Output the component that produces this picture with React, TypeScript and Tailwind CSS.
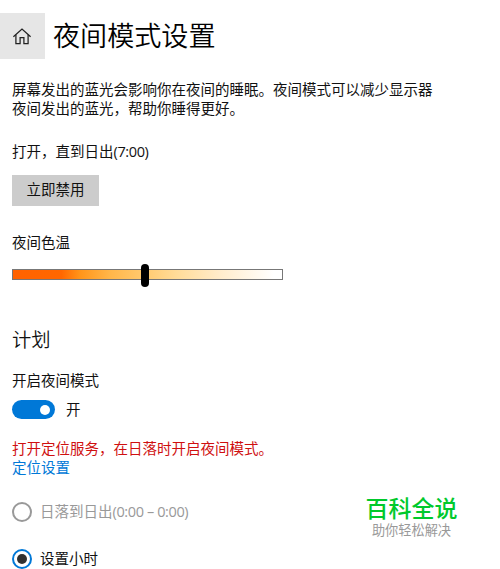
import type { ReactNode } from 'react';

function HomeIcon() {
  return (
    <svg width="20" height="20" viewBox="0 0 20 20" fill="none" stroke="#222" strokeWidth="1.25">
      <path d="M1.4 10.8 10 3l8.6 7.8" />
      <path d="M3.9 8.8v8.7h4.2v-6h3.8v6h4.2V8.8" />
    </svg>
  );
}

function Latin({ children }: { children: ReactNode }) {
  return <span className="tracking-[-0.38px]">{children}</span>;
}

function Radio({ checked }: { checked?: boolean }) {
  return (
    <span
      className={
        checked
          ? 'flex size-5 shrink-0 items-center justify-center rounded-full border-2 border-[#0078d7]'
          : 'flex size-5 shrink-0 items-center justify-center rounded-full border-2 border-[#999]'
      }
    >
      {checked && <span className="size-[10px] rounded-full bg-[#303030]" />}
    </span>
  );
}

export default function App() {
  return (
    <div
      lang="zh-CN"
      className="relative h-[569px] w-[500px] overflow-hidden bg-white pt-[13px] font-['Open_Sans','Noto_Sans_CJK_SC',sans-serif] text-[14.5px] leading-[19.5px] text-[#111]"
    >
      <header className="flex h-[46px] items-center">
        <div className="flex h-full w-[45px] items-center justify-center bg-[#e6e6e6] pr-px">
          <HomeIcon />
        </div>
        <h1 className="ml-2 text-[27.1px] leading-[46px] font-[350] text-black">夜间模式设置</h1>
      </header>

      <main className="pl-3">
        <p className="mt-[20.5px] whitespace-nowrap">
          屏幕发出的蓝光会影响你在夜间的睡眠。夜间模式可以减少显示器
          <br />
          夜间发出的蓝光，帮助你睡得更好。
        </p>
        <p className="mt-[23px]">
          打开，直到日出<Latin>(7:00)</Latin>
        </p>
        <button className="mt-[13.5px] block h-[31px] w-[87px] bg-[#ccc]">立即禁用</button>

        <p className="mt-[27px]">夜间色温</p>
        <div className="mt-[10.5px] flex h-6 w-[271px] items-center">
          <div className="relative h-[11px] w-full border border-[#777] bg-[linear-gradient(90deg,#ff6200_0%,#ff6700_18%,#ff951a_25%,#ffb649_36%,#ffca70_49%,#ffdc99_61%,#ffeccb_77%,#fff_97%)]">
            <span className="absolute -top-[6px] left-[128px] h-[23px] w-2 rounded-full bg-black" />
          </div>
        </div>

        <h2 className="mt-[40px] text-[19.3px] leading-[26px] font-[350]">计划</h2>
        <p className="mt-[18.5px]">开启夜间模式</p>
        <div className="mt-[9px] flex h-5 items-center">
          <span className="flex h-[19px] w-[43px] items-center justify-end rounded-full bg-[#0078d7] pr-[5px]">
            <span className="size-[10px] rounded-full bg-white" />
          </span>
          <span className="ml-[11px]">开</span>
        </div>

        <p className="mt-[19px] text-[#cf1010]">打开定位服务，在日落时开启夜间模式。</p>
        <a className="block text-[#0078d7]">定位设置</a>

        <div className="mt-6 flex h-5 items-center gap-2 text-[#999]">
          <Radio />
          <span>
            日落到日出<Latin>(0:00 – 0:00)</Latin>
          </span>
        </div>
        <div className="mt-[27px] flex h-5 items-center gap-2">
          <Radio checked />
          <span>设置小时</span>
        </div>
      </main>

      <div className="absolute top-[493px] left-[365px] w-[93px] text-center whitespace-nowrap">
        <div className="text-[23px] leading-[30px] font-medium text-[#00c92c]">百科全说</div>
        <div className="text-[13.2px] leading-[14px] text-[#999]">助你轻松解决</div>
      </div>
    </div>
  );
}
